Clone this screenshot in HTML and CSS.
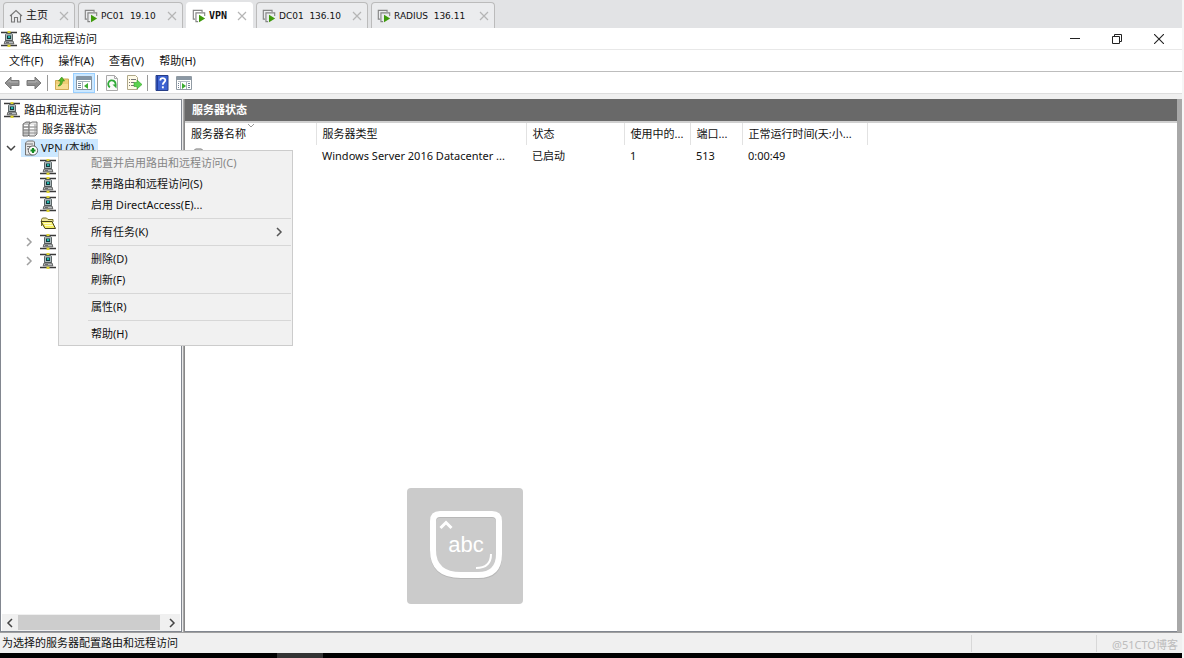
FILE: index.html
```html
<!DOCTYPE html>
<html lang="zh-CN">
<head>
<meta charset="utf-8">
<title>路由和远程访问</title>
<link rel="stylesheet" href="styles.css">
</head>
<body>
<svg class="sprites" aria-hidden="true">
  <symbol id="net" viewBox="0 0 16 16">
    <path d="M0 1.500h16M0 14.500h16" stroke="#3a3a3a" stroke-width="1.400"/>
    <path d="M6.500 0h3v2.500h-3zM6.500 13.500h3V16h-3z" fill="#ded432"/>
    <path d="M4.500 3.500l1-1h5l1 1v6h-7z" fill="#aab8ba" stroke="#3e4749" stroke-width=".8"/>
    <path d="M6 4.500h4v3.500H6z" fill="#11383b"/>
    <path d="M7 5h2.200v2H7z" fill="#24b5ac"/>
    <path d="M4 10h8l.8 2.800H3.200z" fill="#b9bec0" stroke="#444" stroke-width=".8"/>
    <path d="M5 11.500h3" stroke="#555" stroke-width=".8"/>
  </symbol>
  <symbol id="servers" viewBox="0 0 16 16">
    <path d="M1 3l3-2h4v12l-2 2H1z" fill="#c4c4c4" stroke="#555" stroke-width=".8"/>
    <path d="M7 3l3-2h5v12l-2 2H7z" fill="#e8e8e8" stroke="#555" stroke-width=".8"/>
    <path d="M1 6h14M1 9h14M1 12h14" stroke="#777" stroke-width=".8"/>
    <path d="M2 4.500h4M2 7.500h4M8 4.500h4M8 7.500h4" stroke="#fff"/>
    <path d="M13 3v11" stroke="#999" stroke-width=".8"/>
  </symbol>
  <symbol id="server-on" viewBox="0 0 16 16">
    <path d="M2.500 3l2-2h6l1 1v11l-2 2h-7z" fill="#e6e6e6" stroke="#666" stroke-width=".9"/>
    <path d="M3 4h7M4 6.500h5M4 9h3" stroke="#777"/>
    <circle cx="10" cy="10.500" r="4.600" fill="#fff" stroke="#555" stroke-width=".9"/>
    <path d="M10 8v5M7.500 10.500h5" stroke="#148a22" stroke-width="2.200"/>
  </symbol>
  <symbol id="folder" viewBox="0 0 16 16">
    <path d="M1.500 11V4.500l1-1.500h4L8 4.500h5V7" fill="#eee79a" stroke="#77702a"/>
    <path d="M1 6.500h11l3.500 7H5z" fill="#f5ee62" stroke="#45421c"/>
    <path d="M3.500 8.500h8M5 10.500h8" stroke="#fffbd0"/>
  </symbol>
  <symbol id="vm" viewBox="0 0 16 16">
    <path d="M3.500 11.500h-2v-10h10v2" fill="none" stroke="#858585" stroke-width="1.300"/>
    <path d="M7 14.500H4.500v-10h10V8" fill="none" stroke="#858585" stroke-width="1.300"/>
    <path d="M8 6.500l7 4.300-7 4.400z" fill="#3f9a0c"/>
  </symbol>
  <symbol id="x" viewBox="0 0 10 10"><path d="M1 1l8 8M9 1L1 9" fill="none" stroke="currentColor" stroke-width="1.200"/></symbol>
  <symbol id="arrow" viewBox="0 0 16 14">
    <path d="M1 7l6-6v3.500h8v5H7V13z" fill="#8e8e8e" stroke="#7a7a7a"/>
    <path d="M4 6.500l2-2v1.500h8" fill="none" stroke="#b5b5b5"/>
  </symbol>
  <symbol id="chev" viewBox="0 0 8 10"><path d="M2 1l4 4-4 4" fill="none" stroke="currentColor" stroke-width="1.500"/></symbol>
</svg>

<div class="app">
  <nav class="tabs" aria-label="虚拟机">
    <div class="tab tab-home"><svg class="i14" viewBox="0 0 14 14"><path d="M1 7l6-5.500L13 7M2.500 6v7h3V8.500h3V13h3V6" fill="none" stroke="#777" stroke-width="1.100"/></svg><button class="tab-name cjk">主页</button><button class="close" aria-label="关闭"><svg><use href="#x"/></svg></button></div>
    <div class="tab tab-pc"><svg class="i14"><use href="#vm"/></svg><button class="tab-name">PC01&nbsp; 19.10</button><button class="close" aria-label="关闭"><svg><use href="#x"/></svg></button></div>
    <div class="tab tab-vpn active"><svg class="i14"><use href="#vm"/></svg><button class="tab-name">VPN</button><button class="close" aria-label="关闭"><svg><use href="#x"/></svg></button></div>
    <div class="tab tab-dc"><svg class="i14"><use href="#vm"/></svg><button class="tab-name">DC01&nbsp; 136.10</button><button class="close" aria-label="关闭"><svg><use href="#x"/></svg></button></div>
    <div class="tab tab-radius"><svg class="i14"><use href="#vm"/></svg><button class="tab-name">RADIUS&nbsp; 136.11</button><button class="close" aria-label="关闭"><svg><use href="#x"/></svg></button></div>
  </nav>

  <header class="titlebar">
    <svg class="i16"><use href="#net"/></svg>
    <h1>路由和远程访问</h1>
    <div class="winbtns">
      <button aria-label="最小化"><svg viewBox="0 0 10 10"><path d="M0 4.500h10" stroke="#222"/></svg></button>
      <button aria-label="还原"><svg viewBox="0 0 10 10"><path d="M.5 2.500h7v7h-7zM2.500 2V.5h7v7H8" fill="none" stroke="#222"/></svg></button>
      <button aria-label="关闭"><svg viewBox="0 0 10 10"><path d="M0 0l10 10M10 0L0 10" stroke="#222" stroke-width="1.100"/></svg></button>
    </div>
  </header>

  <nav class="menubar">
    <button>文件(F)</button><button>操作(A)</button><button>查看(V)</button><button>帮助(H)</button>
  </nav>

  <div class="toolbar">
    <button aria-label="后退"><svg class="i16"><use href="#arrow"/></svg></button>
    <button aria-label="前进"><svg class="i16 flip"><use href="#arrow"/></svg></button>
    <span class="rule"></span>
    <button aria-label="上一级"><svg class="i16" viewBox="0 0 16 16"><path d="M1.500 14.500v-9h4l1-1.500h8v10.500z" fill="#efce75" stroke="#d0aa55"/><path d="M2 9h12v5H2z" fill="#f7dc91"/><path d="M4 11c3 0 4.500-2 4.500-5h2L7.800 2 4.500 6h2c0 2-.5 3-2.500 5z" fill="#55b928" stroke="#348b18" stroke-width=".6"/></svg></button>
    <button class="on" aria-label="显示树"><svg class="i16" viewBox="0 0 16 16"><path d="M.5 1.500h15v13H.5z" fill="#fff" stroke="#8795a2"/><path d="M1 2h14v3H1z" fill="#8395a5"/><path d="M2 6.500h12" stroke="#a8b4bd"/><path d="M6.500 7v7" stroke="#a6b1bb"/><path d="M2 8.500h3M2 10.500h3M2 12.500h3" stroke="#718293"/><path d="M12 8v6L8 11z" fill="#3bac30"/></svg></button>
    <span class="rule"></span>
    <button aria-label="刷新"><svg class="i16" viewBox="0 0 16 16"><path d="M2.500.5h8l3 3v12h-11z" fill="#fafafa" stroke="#aaa"/><path d="M10.500.5v3h3" fill="none" stroke="#aaa"/><path d="M6 12.200A3.700 3.700 0 1 1 11 11" fill="none" stroke="#30aa38" stroke-width="1.800"/><path d="M8.500 9.500h4v4z" fill="#30aa38"/></svg></button>
    <button aria-label="导出列表"><svg class="i16" viewBox="0 0 16 16"><path d="M1.500.5h8l2 2v12h-10z" fill="#fffbe8" stroke="#b0a889"/><path d="M3 4.500h1M5 4.500h5M3 7.500h1M5 7.500h3M3 10.500h1M5 10.500h4" stroke="#777"/><path d="M8 7.500h3V5l5 4.500-5 4.500v-2.500H8z" fill="#5bd34d" stroke="#36a02a" stroke-width=".6"/></svg></button>
    <span class="rule"></span>
    <button aria-label="帮助"><svg class="i16" viewBox="0 0 16 16"><path d="M2 .5h12v15H2z" fill="#3d63d2" stroke="#273e87"/><path d="M3.500 1v14" stroke="#203c9c"/><path d="M6.300 5.500c0-3 5-3 5-.2 0 2-2.500 2-2.500 4.500" fill="none" stroke="#fff" stroke-width="1.800"/><path d="M7.900 11.300h1.900v2H7.900z" fill="#fff"/></svg></button>
    <button aria-label="操作窗格"><svg class="i16" viewBox="0 0 16 16"><path d="M.5 1.500h15v13H.5z" fill="#fff" stroke="#909aa3"/><path d="M1 2h14v3H1z" fill="#8b98a4"/><path d="M2 6.500h12" stroke="#b4bdc5"/><path d="M4.500 7v7M10.500 7v7" stroke="#a6b1bb"/><path d="M2 8.500h1M2 10.500h1M2 12.500h1M12 8.500h2M12 10.500h2M12 12.500h2" stroke="#718293"/><path d="M6 8v6l4-3z" fill="#3bac30"/></svg></button>
  </div>

  <main class="panes">
    <aside class="left">
      <ul class="tree">
        <li><svg class="i16"><use href="#net"/></svg><span>路由和远程访问</span></li>
        <li class="l1"><svg class="i16"><use href="#servers"/></svg><span>服务器状态</span></li>
        <li class="l1 open"><svg class="tw down"><use href="#chev"/></svg><div class="sel"><svg class="i16"><use href="#server-on"/></svg><span>VPN (本地)</span></div></li>
        <li class="l2"><svg class="i16"><use href="#net"/></svg></li>
        <li class="l2"><svg class="i16"><use href="#net"/></svg></li>
        <li class="l2"><svg class="i16"><use href="#net"/></svg></li>
        <li class="l2"><svg class="i16"><use href="#folder"/></svg></li>
        <li class="l2 more"><svg class="tw"><use href="#chev"/></svg><svg class="i16"><use href="#net"/></svg></li>
        <li class="l2 more"><svg class="tw"><use href="#chev"/></svg><svg class="i16"><use href="#net"/></svg></li>
      </ul>
      <div class="scroll">
        <button aria-label="向左"><svg class="sc flip"><use href="#chev"/></svg></button>
        <div class="thumb"></div>
        <button aria-label="向右"><svg class="sc"><use href="#chev"/></svg></button>
      </div>
    </aside>
    <section class="right">
      <h2>服务器状态</h2>
      <div class="list">
        <table>
          <colgroup><col class="c1"><col class="c2"><col class="c3"><col class="c4"><col class="c5"><col class="c6"></colgroup>
          <thead><tr><th>服务器名称<svg class="sort" viewBox="0 0 8 4"><path d="M1 0l3 3 3-3" fill="none" stroke="#999"/></svg></th><th>服务器类型</th><th>状态</th><th>使用中的...</th><th>端口...</th><th>正常运行时间(天:小...</th></tr></thead>
          <tbody><tr><td><svg class="i16"><use href="#server-on"/></svg></td><td>Windows Server 2016 Datacenter ...</td><td>已启动</td><td>1</td><td>513</td><td>0:00:49</td></tr></tbody>
        </table>
      </div>
    </section>
  </main>

  <footer class="status"><span class="msg">为选择的服务器配置路由和远程访问</span><span class="cell"></span><span class="cell mark">@51CTO博客</span></footer>
  <div class="taskbar"><span></span></div>

  <div class="menu" role="menu">
    <button disabled role="menuitem">配置并启用路由和远程访问(C)</button>
    <button role="menuitem">禁用路由和远程访问(S)</button>
    <button role="menuitem">启用 DirectAccess(E)...</button>
    <hr>
    <button role="menuitem">所有任务(K)<svg class="sub"><use href="#chev"/></svg></button>
    <hr>
    <button role="menuitem">删除(D)</button>
    <button role="menuitem">刷新(F)</button>
    <hr>
    <button role="menuitem">属性(R)</button>
    <hr>
    <button role="menuitem">帮助(H)</button>
  </div>

  <div class="ime">
    <svg viewBox="0 0 116 116">
      <path d="M33 27h52q7 0 7 7v34q0 20-20 20H54Q26 88 26 63V34q0-7 7-7z" fill="none" stroke="#b8b8b8" stroke-width="6"/>
      <path d="M33 26h52q7 0 7 7v33q0 21-21 21H54Q26 87 26 62V33q0-7 7-7z" fill="none" stroke="#fff" stroke-width="6"/>
      <path d="M33.500 40l5.500-5.500 5.500 5.500" fill="none" stroke="#fff" stroke-width="3"/>
      <path d="M84 66q0 14-15 14" fill="none" stroke="#fff" stroke-width="2"/>
      <text x="59" y="64" text-anchor="middle">abc</text>
    </svg>
  </div>
</div>
</body>
</html>
```
FILE: styles.css
```css
* { box-sizing: border-box; }
body {
  margin: 0;
  background: #f6f6f6;
  color: #111;
  font: 11px/16px "Noto Sans", "Noto Sans CJK SC", sans-serif;
}
button {
  margin: 0;
  padding: 0;
  border: 0;
  background: none;
  color: inherit;
  font: inherit;
}
svg { display: block; flex: none; }
.sprites { position: absolute; width: 0; height: 0; }
.i16 { width: 16px; height: 16px; }
.i14 { width: 14px; height: 14px; }
.flip { transform: scaleX(-1); }

.app {
  position: relative;
  display: flex;
  flex-direction: column;
  min-height: 100vh;
  margin-right: 2px;
  background: #f0f0f0;
}

.tabs {
  display: flex;
  gap: 3px;
  height: 28px;
  padding: 2px 3px 0;
  background: #e2e3e5;
}
.tab {
  display: flex;
  align-items: center;
  gap: 3px;
  padding: 0 5px;
  border: 1px solid #bbb;
  border-bottom: 0;
  border-radius: 4px 4px 0 0;
  background: #ebecee;
  font: 9px/16px "DejaVu Sans", "Noto Sans CJK SC", sans-serif;
}
.tab.active {
  border-color: #fff;
  background: #fff;
  font: bold 10px/16px "DejaVu Sans Mono", monospace;
}
.tab-name { white-space: nowrap; }
.tab-name.cjk { font-size: 11px; }
.tab-home { width: 72px; }
.tab-pc { width: 105px; }
.tab-vpn { width: 67px; }
.tab-dc { width: 112px; }
.tab-radius { width: 124px; }
.close { margin-left: auto; color: #b5b5b5; }
.close svg { width: 10px; height: 10px; }

.titlebar {
  display: flex;
  align-items: center;
  gap: 3px;
  height: 22px;
  padding: 0 2px 0 1px;
  border-bottom: 1px solid #e8e8e8;
  background: #fff;
}
h1 { margin: 0; font-size: 11px; font-weight: normal; }
.winbtns { display: flex; margin-left: auto; height: 100%; }
.winbtns button { display: grid; place-items: center; width: 42px; }
.winbtns svg { width: 10px; height: 10px; }

.menubar {
  display: flex;
  gap: 15px;
  height: 22px;
  padding-left: 9px;
  border-bottom: 1px solid #bdbdbd;
  background: #fff;
}

.toolbar {
  display: flex;
  align-items: center;
  height: 22px;
  padding-left: 1px;
  border-bottom: 1px solid #dedede;
  background: #fff;
}
.toolbar button { display: grid; place-items: center; width: 22px; height: 20px; }
.toolbar .on { outline: 1px solid #99cfff; outline-offset: -1px; background: #cce8ff; }
.rule { width: 1px; height: 16px; margin: 0 3px 0 2px; background: #999; }

.panes {
  display: flex;
  flex: 1;
  gap: 2px;
  padding-top: 5px;
  background: linear-gradient(#f0f0f0, #f0f0f0) top / 100% 5px no-repeat, #a8a8a8;
}
.left {
  display: flex;
  flex-direction: column;
  width: 182px;
  border: 1px solid #828790;
  outline: 1px solid #e8e8e8;
  background: #fff;
}
.tree {
  display: grid;
  grid-auto-rows: 1fr;
  height: 169px;
  margin: 1px 0 0;
  padding: 0 0 0 3px;
  list-style: none;
}
.tree li { display: flex; align-items: center; gap: 4px; }
.tree .l1 { padding-left: 18px; }
.tree .l2 { padding-left: 36px; }
.tree .open { gap: 6px; padding-left: 3px; }
.tree .more { gap: 7px; padding-left: 21px; color: #a0a0a0; }
.tw { width: 8px; height: 10px; }
.down { transform: rotate(90deg); color: #444; }
.sel { display: flex; align-items: center; gap: 2px; height: 18px; padding: 0 4px 0 2px; background: #cce8ff; }
.scroll {
  display: flex;
  height: 17px;
  margin: auto 1px 0;
  background: #f0f0f0;
}
.scroll button { display: grid; place-items: center; width: 16px; }
.sc { width: 8px; height: 10px; color: #444; }
.thumb { flex: 1; margin: 1px 4px 1px 0; background: #cdcdcd; }

.right {
  display: flex;
  flex: 1;
  flex-direction: column;
  min-width: 0;
  margin-right: 5px;
  border-left: 1px solid #888;
}
h2 {
  height: 24px;
  margin: 0;
  padding: 3px 7px;
  border-bottom: 2px solid #d0d0d0;
  background: #696969;
  color: #fff;
  font-size: 11px;
  line-height: 16px;
}
.list { flex: 1; border-bottom: 1px solid #828790; background: #fff; }
table { border-collapse: collapse; table-layout: fixed; width: 682px; }
.c1 { width: 131px; }
.c2 { width: 210px; }
.c3 { width: 98px; }
.c4 { width: 66px; }
.c5 { width: 52px; }
.c6 { width: 125px; }
th, td { height: 22px; padding: 0 6px; text-align: left; font-weight: normal; white-space: nowrap; }
th { position: relative; border-right: 1px solid #e2e2e2; }
.sort { position: absolute; top: 1px; left: 62px; width: 8px; height: 4px; }

.status {
  display: flex;
  height: 21px;
  padding: 2px 4px 1px 2px;
  border-top: 1px solid #a0a0a0;
  background: #f0f0f0;
}
.msg { flex: 1; }
.cell { width: 125px; border-left: 1px solid #d8d8d8; }
.mark { width: 82px; padding-left: 15px; color: #bdbdbd; line-height: 19px; white-space: nowrap; }
.taskbar { height: 5px; background: #000; }
.taskbar span { display: block; width: 46px; height: 5px; margin-left: 277px; background: #333; }

.menu {
  position: absolute;
  top: 150px;
  left: 58px;
  width: 235px;
  padding: 1px;
  border: 1px solid #ccc;
  background: #f1f1f1;
}
.menu button {
  display: flex;
  align-items: center;
  justify-content: space-between;
  width: 100%;
  height: 21px;
  padding: 0 8px 0 31px;
}
.menu button:disabled { color: #858585; }
.menu hr { height: 1px; margin: 3px 0 2px 28px; border: 0; background: #d7d7d7; }
.sub { width: 8px; height: 10px; color: #555; }

.ime {
  position: absolute;
  top: 488px;
  left: 407px;
  width: 116px;
  height: 116px;
  border-radius: 4px;
  background: #cbcbcb;
}
.ime text { fill: #fff; font: 22px "Liberation Sans", sans-serif; }
```
